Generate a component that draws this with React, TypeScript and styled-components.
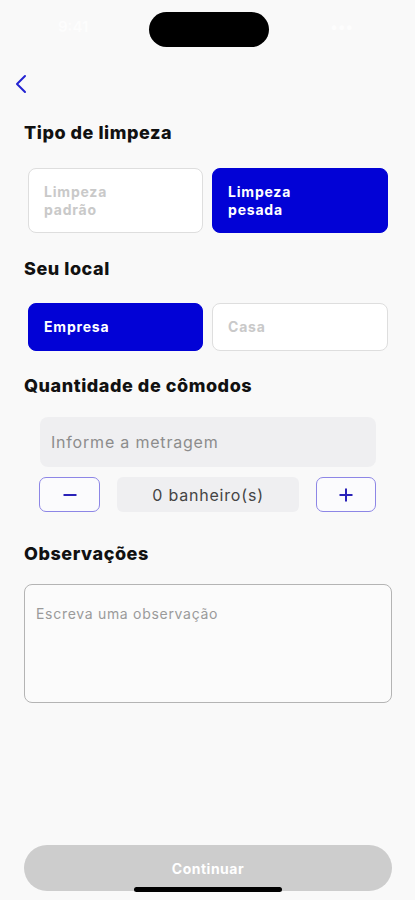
import React, { useState } from 'react';
import styled, { createGlobalStyle } from 'styled-components';

const GlobalStyle = createGlobalStyle`
  html, body {
    margin: 0;
    padding: 0;
    background: #f9f9f9;
  }
  * {
    box-sizing: border-box;
  }
  body {
    font-family: Inter, 'Noto Sans', sans-serif;
    -webkit-font-smoothing: antialiased;
  }
`;

const blue = '#0202d6';

const Screen = styled.div`
  position: relative;
  min-height: 100vh;
  display: flex;
  flex-direction: column;
  background: #f9f9f9;
`;

const StatusBar = styled.div`
  height: 58px;
  display: flex;
  align-items: flex-start;
  justify-content: space-between;
  padding: 17px 62px 0 58px;
  color: #fdfdfd;
  font-size: 15px;
  font-weight: 600;
`;

const Island = styled.div`
  width: 120px;
  height: 35px;
  margin-top: -5px;
  border-radius: 18px;
  background: #000;
`;

const BackButton = styled.button`
  width: 40px;
  height: 36px;
  margin-top: 8px;
  padding: 0 0 0 14px;
  border: none;
  background: transparent;
  display: flex;
  align-items: center;
  cursor: pointer;
`;

const Title = styled.h2<{ $mt: number }>`
  margin: ${({ $mt }) => $mt}px 0 0 24px;
  font-size: 18px;
  line-height: 22px;
  font-weight: 800;
  color: #111;
  letter-spacing: 0.55px;
`;

const OptionRow = styled.div<{ $mt: number }>`
  display: grid;
  grid-template-columns: 175px 176px;
  column-gap: 9px;
  margin: ${({ $mt }) => $mt}px 27px 0 28px;
`;

const Option = styled.button<{ $active: boolean; $height: number }>`
  height: ${({ $height }) => $height}px;
  padding: 0 14px 0 15px;
  border-radius: 8px;
  border: 1px solid ${({ $active }) => ($active ? blue : '#dedede')};
  background: ${({ $active }) => ($active ? blue : '#ffffff')};
  color: ${({ $active }) => ($active ? '#ffffff' : '#c9c9c9')};
  font-family: Inter, 'Noto Sans', sans-serif;
  font-size: 14px;
  line-height: 18px;
  font-weight: 700;
  letter-spacing: 0.8px;
  text-align: left;
  display: flex;
  align-items: center;
  cursor: pointer;
`;

const MeterInput = styled.input`
  display: block;
  height: 50px;
  margin: 20px 39px 0 40px;
  padding: 0 11px;
  border: none;
  border-radius: 8px;
  background: #efeff1;
  font-family: Inter, 'Noto Sans', sans-serif;
  font-size: 16px;
  letter-spacing: 0.8px;
  color: #333;
  outline: none;

  &::placeholder {
    color: #8c8c8c;
  }
`;

const Stepper = styled.div`
  display: grid;
  grid-template-columns: 61px 1fr 60px;
  column-gap: 17px;
  height: 35px;
  margin: 10px 39px 0 39px;
`;

const StepButton = styled.button`
  border: 1px solid #8d86e6;
  border-radius: 7px;
  background: #fbfbfd;
  display: flex;
  align-items: center;
  justify-content: center;
  padding: 0;
  cursor: pointer;
`;

const Counter = styled.div`
  border-radius: 6px;
  background: #efeff1;
  display: flex;
  align-items: center;
  justify-content: center;
  font-size: 16px;
  color: #444;
  letter-spacing: 0.8px;
`;

const Notes = styled.textarea`
  display: block;
  height: 119px;
  margin: 19px 23px 0 24px;
  padding: 20px 11px;
  border: 1px solid #b4b4b4;
  border-radius: 8px;
  background: #fbfbfb;
  resize: none;
  font-family: Inter, 'Noto Sans', sans-serif;
  font-size: 14px;
  letter-spacing: 0.7px;
  color: #333;
  outline: none;

  &::placeholder {
    color: #9a9a9a;
  }
`;

const ContinueButton = styled.button`
  margin: auto 23px 9px 24px;
  height: 46px;
  border: none;
  border-radius: 23px;
  background: #cdcdcd;
  color: #ffffff;
  font-family: Inter, 'Noto Sans', sans-serif;
  font-size: 14px;
  font-weight: 700;
  letter-spacing: 0.5px;
`;

const HomeIndicator = styled.div`
  position: absolute;
  left: 134px;
  bottom: 8px;
  width: 148px;
  height: 5px;
  border-radius: 3px;
  background: #000;
`;

const Chevron = () => (
  <svg width="14" height="20" viewBox="0 0 14 20" fill="none">
    <path d="M11 2 L3 10 L11 18" stroke="#2323d2" strokeWidth="2" strokeLinecap="round" strokeLinejoin="round" />
  </svg>
);

const Minus = () => (
  <svg width="16" height="16" viewBox="0 0 16 16">
    <path d="M1.5 8 H14.5" stroke="#2a22b8" strokeWidth="2" />
  </svg>
);

const Plus = () => (
  <svg width="16" height="16" viewBox="0 0 16 16">
    <path d="M1.5 8 H14.5 M8 1.5 V14.5" stroke="#2a22b8" strokeWidth="2" />
  </svg>
);

export default function App() {
  const [cleaning, setCleaning] = useState<'padrao' | 'pesada'>('pesada');
  const [place, setPlace] = useState<'empresa' | 'casa'>('empresa');
  const [baths, setBaths] = useState(0);

  return (
    <Screen>
      <GlobalStyle />
      <StatusBar>
        <span>9:41</span>
        <Island />
        <span>•••</span>
      </StatusBar>

      <BackButton aria-label="Voltar">
        <Chevron />
      </BackButton>

      <Title $mt={20}>Tipo de limpeza</Title>
      <OptionRow $mt={24}>
        <Option $height={65} $active={cleaning === 'padrao'} onClick={() => setCleaning('padrao')}>
          Limpeza
          <br />
          padrão
        </Option>
        <Option $height={65} $active={cleaning === 'pesada'} onClick={() => setCleaning('pesada')}>
          Limpeza
          <br />
          pesada
        </Option>
      </OptionRow>

      <Title $mt={25}>Seu local</Title>
      <OptionRow $mt={23}>
        <Option $height={48} $active={place === 'empresa'} onClick={() => setPlace('empresa')}>
          Empresa
        </Option>
        <Option $height={48} $active={place === 'casa'} onClick={() => setPlace('casa')}>
          Casa
        </Option>
      </OptionRow>

      <Title $mt={24}>Quantidade de cômodos</Title>
      <MeterInput placeholder="Informe a metragem" />
      <Stepper>
        <StepButton aria-label="Menos" onClick={() => setBaths(Math.max(0, baths - 1))}>
          <Minus />
        </StepButton>
        <Counter>{baths} banheiro(s)</Counter>
        <StepButton aria-label="Mais" onClick={() => setBaths(baths + 1)}>
          <Plus />
        </StepButton>
      </Stepper>

      <Title $mt={31}>Observações</Title>
      <Notes placeholder="Escreva uma observação" />

      <ContinueButton disabled>Continuar</ContinueButton>
      <HomeIndicator />
    </Screen>
  );
}
